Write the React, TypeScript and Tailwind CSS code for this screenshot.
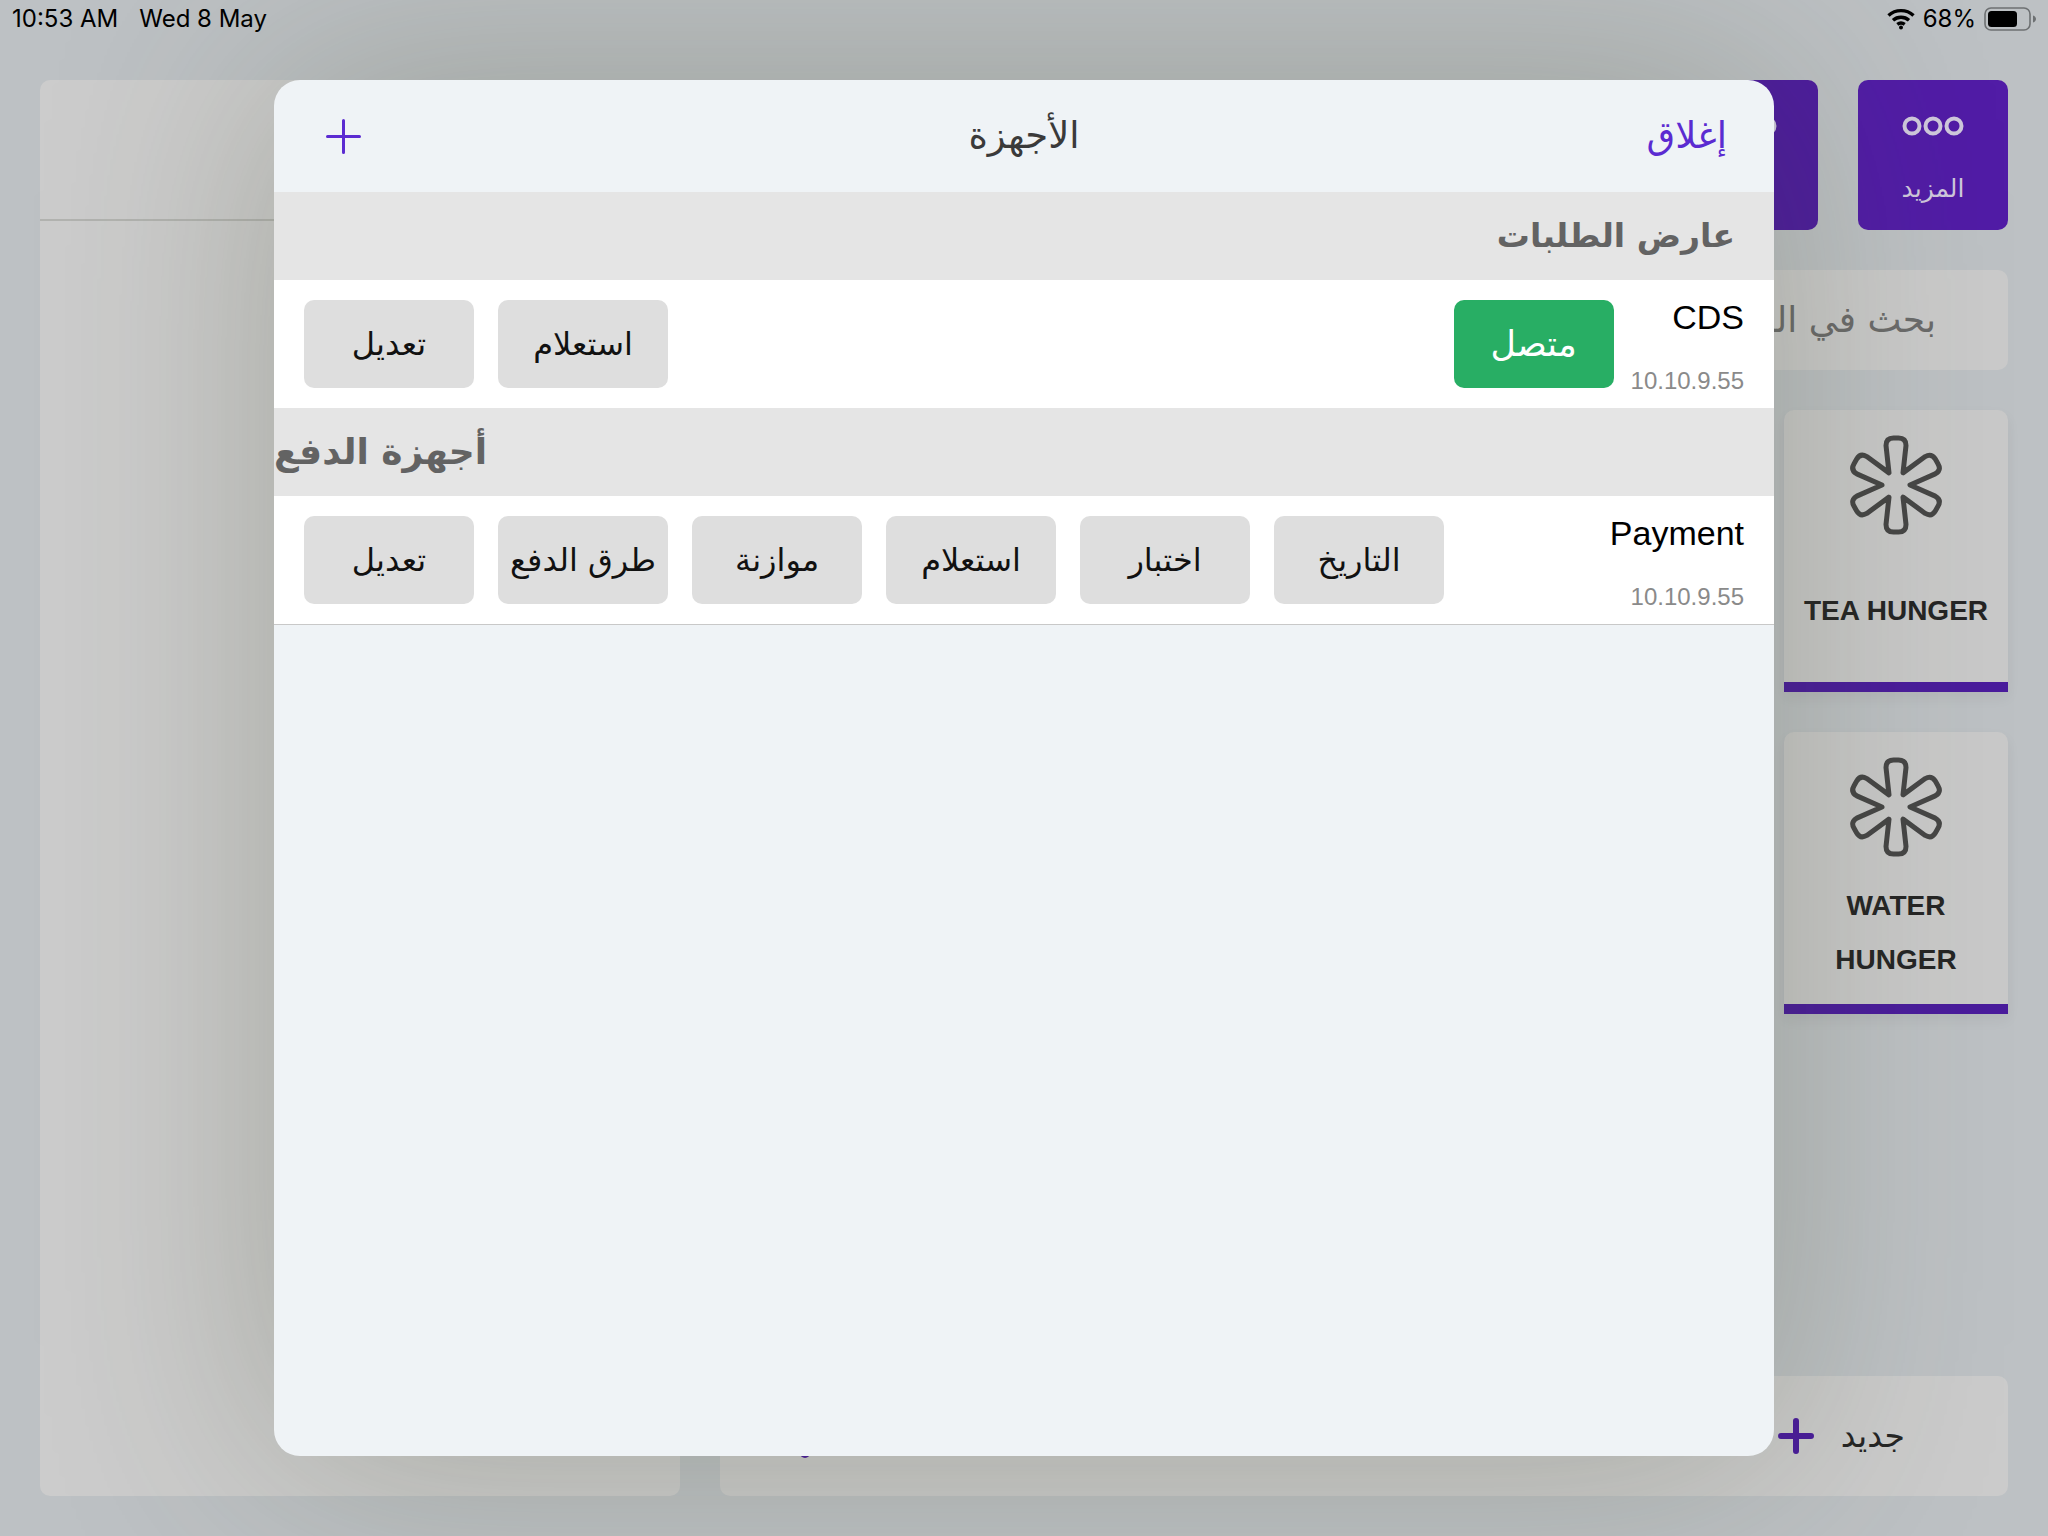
const arabic = "font-['DejaVu_Sans',sans-serif]";
const latin = "font-['Liberation_Sans',Arial,sans-serif]";

// six armed asterisk outline, arms get wider towards their ends
function asteriskPath(cx: number, cy: number, len: number, half: number, notch: number) {
  const pt = (x: number, y: number) => `${(cx + x).toFixed(2)} ${(cy + y).toFixed(2)}`;
  const corner = 7.5;
  let d = "";
  for (let i = 0; i < 6; i++) {
    const a = (i * Math.PI) / 3;
    const ux = Math.sin(a);
    const uy = -Math.cos(a);
    const px = Math.cos(a);
    const py = Math.sin(a);
    const b = a - Math.PI / 6;
    d += `${i === 0 ? "M" : "L"}${pt(Math.sin(b) * notch, -Math.cos(b) * notch)} `;
    d += `L${pt(ux * (len - corner) - px * half, uy * (len - corner) - py * half)} `;
    d += `Q${pt(ux * len - px * half, uy * len - py * half)} ${pt(ux * len - px * (half - corner), uy * len - py * (half - corner))} `;
    d += `L${pt(ux * len + px * (half - corner), uy * len + py * (half - corner))} `;
    d += `Q${pt(ux * len + px * half, uy * len + py * half)} ${pt(ux * (len - corner) + px * half, uy * (len - corner) + py * half)} `;
  }
  return d + "Z";
}

function Asterisk() {
  return (
    <svg width="100" height="102" viewBox="0 0 100 102" fill="none">
      <path d={asteriskPath(50, 51, 47, 10, 14)} stroke="#464646" strokeWidth="5" strokeLinejoin="round" />
    </svg>
  );
}

function PlusIcon({ size, stroke, color }: { size: number; stroke: number; color: string }) {
  return (
    <svg width={size} height={size} viewBox={`0 0 ${size} ${size}`} fill="none" stroke={color} strokeWidth={stroke} strokeLinecap="round">
      <path d={`M${stroke / 2} ${size / 2}H${size - stroke / 2}M${size / 2} ${stroke / 2}V${size - stroke / 2}`} />
    </svg>
  );
}

function Rings({ color }: { color: string }) {
  return (
    <svg width="64" height="22" viewBox="0 0 64 22" fill="none" stroke={color} strokeWidth="4">
      <circle cx="11" cy="11" r="7.5" />
      <circle cx="32" cy="11" r="7.5" />
      <circle cx="53" cy="11" r="7.5" />
    </svg>
  );
}

function ActionButton({ label }: { label: string }) {
  return (
    <div className="flex h-[88px] w-[170px] items-center justify-center rounded-[10px] bg-[#dedede] text-[32px] whitespace-nowrap text-[#111]">
      {label}
    </div>
  );
}

function DeviceName({ name }: { name: string }) {
  return (
    <div className={`${latin} mt-1 flex h-[94px] flex-col items-start justify-between`}>
      <span className="text-[34px] leading-[36px] text-black">{name}</span>
      <span className="text-[24px] leading-[24px] text-[#8a8a8a]">10.10.9.55</span>
    </div>
  );
}

function HungerCard({ title }: { title: string }) {
  return (
    <div className="flex h-[282px] w-[224px] flex-col items-center overflow-hidden rounded-t-[10px] bg-[#c9c9c9] shadow-[0_6px_14px_rgba(0,0,0,0.05)]">
      <div className="pt-6">
        <Asterisk />
      </div>
      <div className={`${latin} flex flex-1 items-center px-4 pt-1 text-center text-[28px] leading-[54px] font-bold text-[#252525]`}>
        {title}
      </div>
      <div className="h-[10px] w-full bg-[#4a1c9c]" />
    </div>
  );
}

export default function App() {
  return (
    <div className="relative h-[1536px] w-[2048px] overflow-hidden bg-[#bdc1c4]">
      {/* status bar */}
      <div className="flex h-[80px] items-start justify-between px-3 pt-[5px] font-['Inter',sans-serif] text-[24px] leading-[28px] text-black">
        <div className="flex gap-[21px]">
          <span>10:53 AM</span>
          <span>Wed 8 May</span>
        </div>
        <div className="flex items-center gap-[8px]">
          <svg width="28" height="22" viewBox="0 0 28 22" fill="none" stroke="#000" strokeWidth="3.4">
            <path d="M1.5 7.5C8.5 1 19.5 1 26.5 7.5" />
            <path d="M6 12.2C10.5 8.2 17.5 8.2 22 12.2" />
            <path d="M10.3 16.4C12.6 14.6 15.4 14.6 17.7 16.4" />
            <circle cx="14" cy="19.6" r="2" fill="#000" stroke="none" />
          </svg>
          <span>68%</span>
          <svg width="52" height="24" viewBox="0 0 52 24">
            <rect x="1" y="1" width="45" height="22" rx="6" fill="none" stroke="#6d7072" strokeWidth="1.6" />
            <rect x="4" y="4" width="29" height="16" rx="3.5" fill="#000" />
            <path d="M49 8.5c2 .6 3 2 3 3.5s-1 2.9-3 3.5z" fill="#6d7072" />
          </svg>
        </div>
      </div>

      {/* page behind the sheet */}
      <div className="flex h-[1416px] gap-10 px-10">
        <div className="w-[640px] rounded-[10px] bg-[#cccccc]">
          <div className="h-[141px] border-b-2 border-[#b2b3b0]" />
        </div>
        <div className="flex flex-1 flex-col items-end">
          <div className="flex justify-end gap-10">
            <div className="flex h-[150px] w-[150px] flex-col items-center rounded-[10px] bg-[#4d1c9e] pt-[35px] pl-[6px]">
              <Rings color="#cfc8dc" />
            </div>
            <div className="flex h-[150px] w-[150px] flex-col items-center rounded-[10px] bg-[#511ca6] pt-[35px]">
              <Rings color="#cfc8dc" />
              <span className={`${arabic} mt-[37px] text-[25px] leading-[30px] text-[#cfc8dc]`}>المزيد</span>
            </div>
          </div>
          <div
            dir="rtl"
            className={`${arabic} mt-10 flex h-[100px] w-full items-center rounded-[10px] bg-[#cacaca] pr-[72px] text-[36px] text-[#6b6b6b]`}
          >
            بحث في المنتجات
          </div>
          <div className="mt-10 flex flex-col gap-[40px]">
            <HungerCard title="TEA HUNGER" />
            <HungerCard title="WATER HUNGER" />
          </div>
          <div className="mt-auto flex h-[120px] w-full items-center rounded-[10px] bg-[#cbcbcb]">
            <div className="mt-[8px] ml-[80px] h-[36px] w-[10px] rounded-full bg-[#4a1c9c]" />
            <div className="mt-[2px] ml-[328px] h-[36px] w-[10px] rounded-full bg-[#4a1c9c]" />
            <div className="ml-auto flex items-center gap-[27px] pr-[103px]">
              <PlusIcon size={36} stroke={6} color="#4a1c9c" />
              <span className={`${arabic} text-[33px] text-[#252525]`}>جديد</span>
            </div>
          </div>
        </div>
      </div>

      {/* devices sheet */}
      <div
        dir="rtl"
        className={`${arabic} absolute top-[80px] left-[274px] flex h-[1376px] w-[1500px] flex-col overflow-hidden rounded-[26px] bg-[#eff3f6] shadow-[0_0_230px_rgba(60,70,40,0.28)]`}
      >
        <div className="grid h-[112px] flex-none grid-cols-3 items-center px-[47px]">
          <span className="text-[37px] text-[#5b2bd1]">إغلاق</span>
          <span className="text-center text-[37px] text-[#3a3a3a]">الأجهزة</span>
          <div className="flex justify-end pl-[5px]">
            <PlusIcon size={35} stroke={3} color="#5b2bd1" />
          </div>
        </div>

        <div className="flex h-[88px] flex-none items-center bg-[#e5e5e5] pr-[39px] text-[33px] font-bold text-[#636363]">
          عارض الطلبات
        </div>
        <div className="flex h-[128px] flex-none items-center bg-white pr-[30px]">
          <DeviceName name="CDS" />
          <div className="mr-[17px] flex h-[88px] w-[160px] items-center justify-center self-center rounded-[10px] bg-[#28ae64] text-[35px] text-white">
            متصل
          </div>
          <div className="mr-auto flex gap-6 pl-[30px]">
            <ActionButton label="استعلام" />
            <ActionButton label="تعديل" />
          </div>
        </div>

        <div className="flex h-[88px] flex-none items-center justify-end overflow-hidden bg-[#e5e5e5] text-[36px] font-bold text-[#636363]">
          <span className="whitespace-nowrap">أجهزة الدفع</span>
        </div>
        <div className="flex h-[129px] flex-none items-center border-b border-[#c8c8c8] bg-white pr-[30px]">
          <DeviceName name="Payment" />
          <div className="mr-auto flex gap-6 pl-[30px]">
            <ActionButton label="التاريخ" />
            <ActionButton label="اختبار" />
            <ActionButton label="استعلام" />
            <ActionButton label="موازنة" />
            <ActionButton label="طرق الدفع" />
            <ActionButton label="تعديل" />
          </div>
        </div>
      </div>
    </div>
  );
}
